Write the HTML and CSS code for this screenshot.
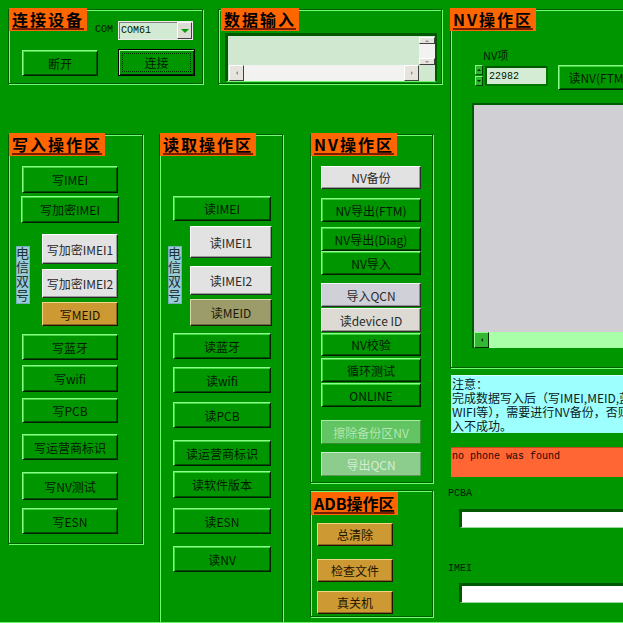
FILE: index.html
```html
<!DOCTYPE html>
<html lang="zh-CN">
<head>
    <meta charset="UTF-8">
    <meta name="viewport" content="width=device-width, initial-scale=1.0">
    <title>写号工具</title>
    <link rel="stylesheet" href="styles.css">
</head>
<body>
<div class="app">
    <div class="left">
        <div class="top-row">
            <!-- 连接设备 -->
            <section class="group connect">
                <div class="connect-head">
                    <h2 class="group-title">连接设备</h2>
                    <span class="com-label">COM</span>
                    <div class="combo">
                        <span class="combo-text">COM61</span>
                        <span class="combo-btn"><i class="tri-down"></i></span>
                    </div>
                </div>
                <div class="connect-btns">
                    <button class="btn">断开</button>
                    <button class="btn btn-default h27">连接</button>
                </div>
            </section>

            <!-- 数据输入 -->
            <section class="group data">
                <h2 class="group-title">数据输入</h2>
                <div class="memo">
                    <div class="memo-text"></div>
                    <div class="vscroll">
                        <span class="sb-btn"><i class="arr arr-up"></i></span>
                        <span class="sb-track"></span>
                        <span class="sb-btn"><i class="arr arr-down"></i></span>
                    </div>
                    <div class="hscroll">
                        <span class="sb-btn"><i class="arr arr-left"></i></span>
                        <span class="sb-track"></span>
                        <span class="sb-btn"><i class="arr arr-right"></i></span>
                    </div>
                    <div class="memo-corner"></div>
                </div>
            </section>
        </div>

        <div class="ops-row">
            <!-- 写入操作区 -->
            <section class="group write">
                <h2 class="group-title">写入操作区</h2>
                <div class="stack">
                    <button class="btn mt10 h27">写IMEI</button>
                    <button class="btn mt3 h27 wide">写加密IMEI</button>
                    <div class="dual-row mt11">
                        <span class="dual">电信双号</span>
                        <div class="stack">
                            <button class="btn grey h30">写加密IMEI1</button>
                            <button class="btn grey mt5 h29">写加密IMEI2</button>
                            <button class="btn gold mt4 h24">写MEID</button>
                        </div>
                    </div>
                    <button class="btn mt8">写蓝牙</button>
                    <button class="btn mt5 h27">写wifi</button>
                    <button class="btn mt6 h25">写PCB</button>
                    <button class="btn mt11">写运营商标识</button>
                    <button class="btn mt12 h28">写NV测试</button>
                    <button class="btn mt8">写ESN</button>
                </div>
            </section>

            <!-- 读取操作区 -->
            <section class="group read">
                <h2 class="group-title">读取操作区</h2>
                <div class="stack">
                    <button class="btn mt40 h25">读IMEI</button>
                    <div class="dual-row mt5">
                        <span class="dual">电信双号</span>
                        <div class="stack">
                            <button class="btn grey h32">读IMEI1</button>
                            <button class="btn grey mt8 h29">读IMEI2</button>
                            <button class="btn olive mt4 h27">读MEID</button>
                        </div>
                    </div>
                    <button class="btn mt7">读蓝牙</button>
                    <button class="btn mt8">读wifi</button>
                    <button class="btn mt9">读PCB</button>
                    <button class="btn mt12">读运营商标识</button>
                    <button class="btn mt5 h27">读软件版本</button>
                    <button class="btn mt10">读ESN</button>
                    <button class="btn mt12">读NV</button>
                </div>
            </section>

            <div class="nv-col">
                <!-- NV操作区 -->
                <section class="group nvops">
                    <h2 class="group-title">NV操作区</h2>
                    <div class="stack">
                        <button class="btn grey mt10 h23">NV备份</button>
                        <button class="btn mt9">NV导出(FTM)</button>
                        <button class="btn mt5">NV导出(Diag)</button>
                        <button class="btn">NV导入</button>
                        <button class="btn lilac mt8">导入QCN</button>
                        <button class="btn sand mt1">读device ID</button>
                        <button class="btn mt1 h23">NV校验</button>
                        <button class="btn mt2">循环测试</button>
                        <button class="btn mt1">ONLINE</button>
                        <button class="btn off mt13" disabled>擦除备份区NV</button>
                        <button class="btn off-pale mt8" disabled>导出QCN</button>
                    </div>
                </section>

                <!-- ADB操作区 -->
                <section class="group adb">
                    <h2 class="group-title">ADB操作区</h2>
                    <div class="stack">
                        <button class="btn gold mt8">总清除</button>
                        <button class="btn gold mt13">检查文件</button>
                        <button class="btn gold mt9">真关机</button>
                    </div>
                </section>
            </div>
        </div>
    </div>

    <div class="right">
        <section class="group nv-panel">
            <h2 class="group-title">NV操作区</h2>
            <div class="nv-label">NV项</div>
            <div class="nv-row">
                <div class="spin">
                    <span class="spin-btn"><i class="arr arr-up dark"></i></span>
                    <span class="spin-btn"><i class="arr arr-down dark"></i></span>
                </div>
                <div class="nv-edit">22982</div>
                <button class="btn nv-read">读NV(FTM)</button>
            </div>
            <div class="nv-list">
                <div class="nv-list-body"></div>
                <div class="nv-list-scroll">
                    <span class="nv-scroll-btn"><i class="arr arr-left dark"></i></span>
                </div>
            </div>
        </section>

        <div class="notice">
            <p>注意：</p>
            <p>完成数据写入后（写IMEI,MEID,蓝牙,</p>
            <p>WIFI等），需要进行NV备份，否则可能导致写</p>
            <p>入不成功。</p>
        </div>

        <div class="status">no phone was found</div>

        <div class="field-label pcba">PCBA</div>
        <div class="field-input pcba-input"></div>
        <div class="field-label imei">IMEI</div>
        <div class="field-input imei-input"></div>
    </div>
</div>
</body>
</html>
```

FILE: styles.css
```css
body {
    margin: 0;
    width: 623px;
    height: 623px;
    overflow: hidden;
    background: #009600;
    color: #001a00;
    font-family: "Noto Sans CJK SC", sans-serif;
    font-size: 12px;
}
.app {
    display: flex;
    height: 622px;
    overflow: hidden;
    border-bottom: 1px solid #6cf56c;
}
.left {
    flex: none;
    width: 434px;
    margin-left: 8px;
}
.top-row {
    display: flex;
    align-items: flex-start;
    margin-top: 9px;
}
.ops-row {
    display: flex;
    align-items: flex-start;
    margin-top: 50px;
}

/* etched group frame */
.group {
    box-sizing: border-box;
    flex: none;
    border: 1px solid #005c00;
    box-shadow: inset 1px 1px 0 #70ff70, 1px 1px 0 #70ff70;
}
.group-title {
    width: fit-content;
    height: 23px;
    margin: -2px 0 0;
    padding: 0 3px;
    background: #ff6600;
    color: #000;
    font-size: 16px;
    font-weight: bold;
    line-height: 23px;
    letter-spacing: 2px;
    white-space: nowrap;
    text-decoration: underline 2px #7a1e00;
    text-underline-offset: 2px;
}

/* buttons */
.btn {
    box-sizing: border-box;
    flex: none;
    display: flex;
    align-items: center;
    justify-content: center;
    height: 26px;
    padding: 0;
    background: #009600;
    color: #001a00;
    font: 12px "Noto Sans CJK SC", sans-serif;
    white-space: nowrap;
    border: 1px solid;
    border-color: #8cff8c #001e00 #001e00 #8cff8c;
    box-shadow: inset 1px 1px 0 #3ed83e, inset -1px -1px 0 #005200;
}
.btn.grey {
    background: #e2e2e2;
    color: #2a2a2a;
    border-color: #ffffff #2a2a2a #2a2a2a #ffffff;
    box-shadow: inset -1px -1px 0 #9a9a9a;
}
.btn.lilac {
    background: #d0d0d8;
    color: #2a2a2a;
    border-color: #f4f4f8 #2a2a2a #2a2a2a #f4f4f8;
    box-shadow: inset -1px -1px 0 #909098;
}
.btn.sand {
    background: #dcdad2;
    color: #2a2a2a;
    border-color: #f8f6f0 #2a2a2a #2a2a2a #f8f6f0;
    box-shadow: inset -1px -1px 0 #9a9890;
}
.btn.gold {
    background: #cc9933;
    color: #1e1400;
    border-color: #f2d48a #1e1400 #1e1400 #f2d48a;
    box-shadow: inset -1px -1px 0 #8a6420;
}
.btn.olive {
    background: #9c9c6a;
    color: #1a1a08;
    border-color: #d8d8a8 #1a1a08 #1a1a08 #d8d8a8;
    box-shadow: inset -1px -1px 0 #6a6a44;
}
.btn.off {
    background: #62c462;
    color: #b4e6b4;
    border-color: #a4eea4 #3a8a3a #3a8a3a #a4eea4;
    box-shadow: none;
}
.btn.off-pale {
    background: #8ccc8c;
    color: #d4ecd4;
    border-color: #c4eec4 #5a9a5a #5a9a5a #c4eec4;
    box-shadow: none;
}
.btn-default {
    border: 1px solid #000;
    box-shadow: inset 1px 1px 0 #8cff8c, inset -1px -1px 0 #002800;
    outline: 1px dotted #003000;
    outline-offset: -5px;
}

.h23 { height: 23px; }
.h24 { height: 24px; }
.h25 { height: 25px; }
.h27 { height: 27px; }
.h28 { height: 28px; }
.h29 { height: 29px; }
.h30 { height: 30px; }
.h32 { height: 32px; }
.mt1 { margin-top: 1px; }
.mt2 { margin-top: 2px; }
.mt3 { margin-top: 3px; }
.mt4 { margin-top: 4px; }
.mt5 { margin-top: 5px; }
.mt6 { margin-top: 6px; }
.mt7 { margin-top: 7px; }
.mt8 { margin-top: 8px; }
.mt9 { margin-top: 9px; }
.mt10 { margin-top: 10px; }
.mt11 { margin-top: 11px; }
.mt12 { margin-top: 12px; }
.mt13 { margin-top: 13px; }
.mt40 { margin-top: 40px; }

.stack {
    display: flex;
    flex-direction: column;
    align-items: flex-start;
}
.dual-row {
    display: flex;
    align-items: flex-start;
}
.dual {
    box-sizing: border-box;
    width: 14px;
    height: 58px;
    background: #98ccd6;
    border: 1px solid #78b0ba;
    color: #1c3038;
    font-size: 13px;
    line-height: 14px;
    letter-spacing: 1px;
    text-align: center;
    writing-mode: vertical-rl;
}

/* 连接设备 */
.connect {
    width: 195px;
    height: 75px;
}
.connect-head {
    display: flex;
    align-items: flex-start;
}
.com-label {
    margin: 14px 0 0 8px;
    font: 10px/12px "Liberation Mono", monospace;
}
.combo {
    box-sizing: border-box;
    display: flex;
    width: 75px;
    height: 19px;
    margin: 11px 0 0 5px;
    background: #d2ead2;
    border: 1px solid #ececec;
    box-shadow: inset 1px 1px 0 #808080;
}
.combo-text {
    flex: 1;
    padding: 3px 0 0 2px;
    font: 10px/12px "Liberation Mono", monospace;
}
.combo-btn {
    box-sizing: border-box;
    display: flex;
    align-items: center;
    justify-content: center;
    width: 15px;
    height: 17px;
    background: #dcdcd4;
    border: 1px solid;
    border-color: #ffffff #404040 #404040 #ffffff;
}
.tri-down {
    width: 0;
    height: 0;
    border-left: 4px solid transparent;
    border-right: 4px solid transparent;
    border-top: 4px solid #00a000;
}
.connect-btns {
    display: flex;
    align-items: flex-start;
    gap: 20px;
    margin-top: 10px;
    padding-left: 13px;
}
.connect-btns .btn:first-child { width: 76px; }
.connect-btns .btn:last-child { width: 77px; margin-top: -1px; }

/* 数据输入 */
.data {
    width: 224px;
    height: 75px;
    margin-left: 15px;
}
.data .group-title { margin-left: 2px; }
.memo {
    box-sizing: border-box;
    display: grid;
    grid-template-columns: 1fr 16px;
    grid-template-rows: 1fr 16px;
    width: 212px;
    height: 49px;
    margin: 2px 0 0 6px;
    background: #d0e8d0;
    border-style: solid;
    border-width: 3px 2px 1px 3px;
    border-color: #005800 #005800 #72f072 #005800;
}
.vscroll {
    display: flex;
    flex-direction: column;
    padding-top: 1px;
}
.vscroll .sb-btn { height: 7px; }
.vscroll .sb-track { flex: 1; }
.hscroll {
    display: flex;
    padding-left: 1px;
}
.hscroll .sb-btn { width: 15px; }
.hscroll .sb-track { flex: 1; }
.sb-btn {
    box-sizing: border-box;
    display: flex;
    align-items: center;
    justify-content: center;
    background: #e6e4dc;
    border: 1px solid;
    border-color: #ffffff #404040 #404040 #ffffff;
}
.sb-track { background: #f2f2f0; }

/* small scroll arrows */
.arr {
    width: 0;
    height: 0;
    border: 2px solid transparent;
}
.arr-up { border-bottom-color: #909090; border-top-width: 0; }
.arr-down { border-top-color: #909090; border-bottom-width: 0; }
.arr-left { border-right-color: #909090; border-left-width: 0; }
.arr-right { border-left-color: #909090; border-right-width: 0; }
.arr.dark.arr-up { border-bottom-color: #002000; }
.arr.dark.arr-down { border-top-color: #002000; }
.arr.dark.arr-left { border-right-color: #003000; }

/* operation groups */
.write {
    width: 135px;
    height: 410px;
}
.write > .stack { padding-left: 13px; }
.write .btn { width: 96px; }
.write .btn.wide { width: 98px; margin-left: -1px; }
.write .dual-row { margin-left: -6px; }
.write .dual { margin-top: 12px; }
.write .dual-row .stack { margin-left: 12px; }
.write .dual-row .btn { width: 76px; }

.read {
    width: 124px;
    height: 489px;
    margin-left: 16px;
}
.read > .stack { padding-left: 13px; }
.read .btn { width: 98px; }
.read .dual-row { margin-left: -5px; }
.read .dual { margin-top: 20px; }
.read .dual-row .stack { margin-left: 8px; }
.read .dual-row .btn { width: 82px; }

.nv-col {
    flex: none;
    width: 123px;
    margin-left: 27px;
}
.nvops {
    width: 123px;
    height: 349px;
}
.nvops .stack { padding-left: 10px; }
.nvops .btn { width: 100px; height: 24px; }
.nvops .btn.h23 { height: 23px; }

.adb {
    width: 123px;
    height: 127px;
    margin-top: 7px;
}
.adb .group-title {
    margin-top: 1px;
    letter-spacing: 0;
}
.adb .stack { padding-left: 6px; }
.adb .btn { width: 76px; height: 23px; }

/* right column */
.right {
    flex: none;
    width: 200px;
    margin-left: 8px;
}
.nv-panel {
    width: 200px;
    height: 359px;
    margin-top: 9px;
}
.nv-panel .group-title { margin-left: -1px; }
.nv-label {
    margin: 17px 0 0 32px;
    font-size: 11px;
    line-height: 14px;
}
.nv-row {
    display: flex;
    align-items: flex-start;
    margin-top: 3px;
}
.spin {
    display: flex;
    flex-direction: column;
    width: 8px;
    margin-left: 24px;
}
.spin-btn {
    box-sizing: border-box;
    display: flex;
    align-items: center;
    justify-content: center;
    height: 10px;
    background: #2cb82c;
    border: 1px solid;
    border-color: #80ff80 #004000 #004000 #80ff80;
}
.spin-btn + .spin-btn { margin-top: 1px; }
.nv-edit {
    box-sizing: border-box;
    width: 63px;
    height: 20px;
    margin: 1px 0 0 2px;
    padding: 3px 0 0 2px;
    background: #d4ecd4;
    border: 2px solid #007400;
    border-top-color: #005800;
    border-left-color: #005800;
    font: 10px/12px "Liberation Mono", monospace;
}
.nv-read {
    width: 80px;
    height: 25px;
    margin-left: 10px;
}
.nv-list {
    box-sizing: border-box;
    display: flex;
    flex-direction: column;
    width: 200px;
    height: 245px;
    margin: 13px 0 0 21px;
    border-top: 2px solid #005a00;
    border-left: 2px solid #005a00;
}
.nv-list-body {
    flex: 1;
    background: #cfcfd4;
}
.nv-list-scroll {
    height: 16px;
    background: #a8ffa8;
}
.nv-scroll-btn {
    box-sizing: border-box;
    display: flex;
    align-items: center;
    justify-content: center;
    width: 15px;
    height: 16px;
    background: #34b834;
    border: 1px solid;
    border-color: #90ff90 #002800 #002800 #90ff90;
}

.notice {
    box-sizing: border-box;
    width: 172px;
    height: 58px;
    margin: 7px 0 0 1px;
    padding: 1px 0 0 1px;
    overflow: hidden;
    background: #9effff;
    border-top: 1px solid #d0ffff;
    color: #0c1c1c;
    font-size: 12px;
    line-height: 14px;
}
.notice p {
    margin: 0;
    white-space: nowrap;
}
.status {
    box-sizing: border-box;
    width: 200px;
    height: 30px;
    margin: 14px 0 0 1px;
    padding: 3px 0 0 1px;
    background: #ff6633;
    border-top: 1px solid #c04a20;
    color: #1a0800;
    font: 10px/12px "Liberation Mono", monospace;
}
.field-label {
    margin-left: -2px;
    font: 10px/14px "Liberation Mono", monospace;
}
.field-label.pcba { margin-top: 10px; }
.field-label.imei { margin-top: 34px; }
.field-input {
    box-sizing: border-box;
    width: 200px;
    height: 19px;
    margin-left: 9px;
    background: #ffffff;
    border-style: solid;
    border-width: 3px 0 1px 3px;
    border-color: #005800 #005800 #9ad89a #005800;
}
.pcba-input { margin-top: 8px; }
.imei-input { margin-top: 7px; height: 20px; }
```
